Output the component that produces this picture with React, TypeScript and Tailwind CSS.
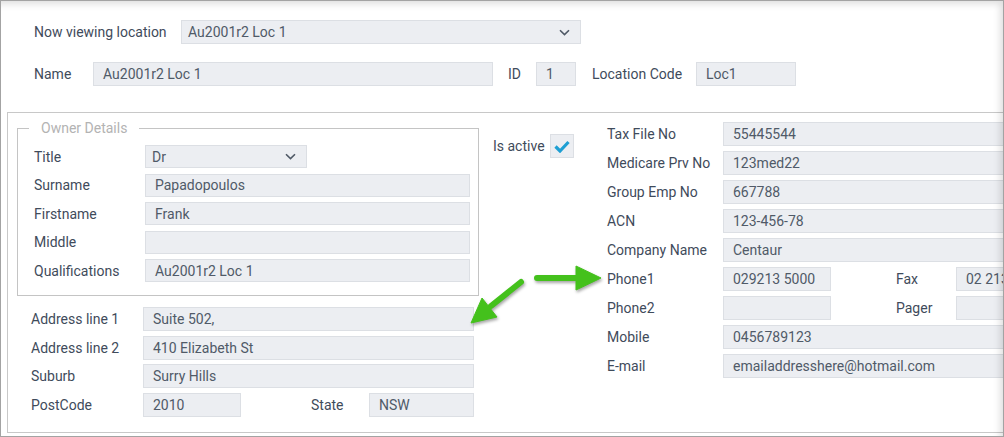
import React from "react";

const font = { fontFamily: "Roboto, 'Noto Sans', sans-serif" };

function Chevron() {
  return (
    <svg width="11" height="7" viewBox="0 0 11 7" className="shrink-0">
      <path d="M1 1.2 L5.5 5.6 L10 1.2" fill="none" stroke="#4f5966" strokeWidth="1.6" />
    </svg>
  );
}

function Field({ value = "", className = "" }: { value?: string; className?: string }) {
  return (
    <div
      className={
        "h-full flex items-center bg-[#eceef2] border border-[#dcdfe4] pl-[9px] text-[#505a68] whitespace-nowrap overflow-hidden " +
        className
      }
    >
      {value}
    </div>
  );
}

function Select({ value, className = "" }: { value: string; className?: string }) {
  return (
    <div
      className={
        "h-full flex items-center justify-between bg-[#eceef2] border border-[#dcdfe4] pl-[6px] pr-[10px] text-[#505a68] " +
        className
      }
    >
      <span>{value}</span>
      <Chevron />
    </div>
  );
}

function Row({
  label,
  labelW,
  children,
  h,
}: {
  label: string;
  labelW: string;
  children: React.ReactNode;
  h: string;
}) {
  return (
    <div className={"flex items-center " + h}>
      <div className={"shrink-0 text-[#3f4b5b] " + labelW}>{label}</div>
      {children}
    </div>
  );
}

export default function App() {
  return (
    <div
      className="relative w-[1004px] h-[437px] border border-[#a3a3a3] bg-white overflow-hidden text-[14px] leading-[20px]"
      style={font}
    >
      {/* header */}
      <div className="pt-[19px] pl-[33px] flex flex-col gap-[18px]">
        <div className="flex items-center h-[24px]">
          <div className="w-[147px] text-[#3f4b5b]">Now viewing location</div>
          <Select value="Au2001r2 Loc 1" className="w-[400px]" />
        </div>
        <div className="flex items-center h-[24px]">
          <div className="w-[59px] text-[#3f4b5b]">Name</div>
          <Field value="Au2001r2 Loc 1" className="w-[400px]" />
          <div className="ml-[15px] w-[28px] text-[#3f4b5b]">ID</div>
          <Field value="1" className="w-[40px]" />
          <div className="ml-[16px] w-[104px] text-[#3f4b5b]">Location Code</div>
          <Field value="Loc1" className="w-[100px]" />
        </div>
      </div>

      {/* main panel */}
      <div className="mt-[26px] ml-[6px] w-[1010px] h-[321px] border border-[#c8c8c8] flex">
        {/* left column */}
        <div className="w-[471px] shrink-0 pl-[9px]">
          <fieldset className="mt-[5px] w-[462px] border border-[#c4c4c4] pb-[13px]">
            <legend className="ml-[11px] px-[12px] text-[#b3b3b3] leading-[20px]">Owner Details</legend>
            <div className="pt-[7px] pl-[16px] flex flex-col gap-[5.5px]">
              <Row label="Title" labelW="w-[111px]" h="h-[23px]">
                <Select value="Dr" className="w-[162px]" />
              </Row>
              <Row label="Surname" labelW="w-[111px]" h="h-[23px]">
                <Field value="Papadopoulos" className="w-[325px]" />
              </Row>
              <Row label="Firstname" labelW="w-[111px]" h="h-[23px]">
                <Field value="Frank" className="w-[325px]" />
              </Row>
              <Row label="Middle" labelW="w-[111px]" h="h-[23px]">
                <Field value="" className="w-[325px]" />
              </Row>
              <Row label="Qualifications" labelW="w-[111px]" h="h-[23px]">
                <Field value="Au2001r2 Loc 1" className="w-[325px]" />
              </Row>
            </div>
          </fieldset>

          <div className="mt-[11px] pl-[14px] flex flex-col gap-[4.67px]">
            <Row label="Address line 1" labelW="w-[112px]" h="h-[24px]">
              <Field value="Suite 502," className="w-[331px]" />
            </Row>
            <Row label="Address line 2" labelW="w-[112px]" h="h-[24px]">
              <Field value="410 Elizabeth St" className="w-[331px]" />
            </Row>
            <Row label="Suburb" labelW="w-[112px]" h="h-[24px]">
              <Field value="Surry Hills" className="w-[331px]" />
            </Row>
            <Row label="PostCode" labelW="w-[112px]" h="h-[24px]">
              <Field value="2010" className="w-[98px]" />
              <div className="ml-[70px] w-[58px] text-[#3f4b5b]">State</div>
              <Field value="NSW" className="w-[105px]" />
            </Row>
          </div>
        </div>

        {/* is active */}
        <div className="ml-[14px] mt-[21px] flex items-center h-[24px] shrink-0">
          <div className="w-[57px] text-[#3f4b5b]">Is active</div>
          <div className="w-[24px] h-[24px] bg-[#eceef2] border border-[#dcdfe4] flex items-center justify-center">
            <svg width="16" height="13" viewBox="0 0 16 13">
              <path d="M1.5 6.5 L6 11 L14.5 2" fill="none" stroke="#1e9fd3" strokeWidth="3.2" />
            </svg>
          </div>
        </div>

        {/* right column */}
        <div className="ml-[33px] mt-[9px] flex-1 flex flex-col gap-[5px]">
          {[
            ["Tax File No", "55445544"],
            ["Medicare Prv No", "123med22"],
            ["Group Emp No", "667788"],
            ["ACN", "123-456-78"],
            ["Company Name", "Centaur"],
          ].map(([l, v]) => (
            <Row key={l} label={l} labelW="w-[116px]" h="h-[24px]">
              <Field value={v} className="flex-1" />
            </Row>
          ))}
          <Row label="Phone1" labelW="w-[116px]" h="h-[24px]">
            <Field value="029213 5000" className="w-[108px]" />
            <div className="ml-[65px] w-[60px] text-[#3f4b5b]">Fax</div>
            <Field value="02 2135 5001" className="flex-1" />
          </Row>
          <Row label="Phone2" labelW="w-[116px]" h="h-[24px]">
            <Field value="" className="w-[108px]" />
            <div className="ml-[65px] w-[60px] text-[#3f4b5b]">Pager</div>
            <Field value="" className="flex-1" />
          </Row>
          <Row label="Mobile" labelW="w-[116px]" h="h-[24px]">
            <Field value="0456789123" className="flex-1" />
          </Row>
          <Row label="E-mail" labelW="w-[116px]" h="h-[24px]">
            <Field value="emailaddresshere@hotmail.com" className="flex-1" />
          </Row>
        </div>
      </div>

      {/* green arrows */}
      <svg
        className="absolute left-0 top-0 pointer-events-none drop-shadow-[1px_2px_1.5px_rgba(0,0,0,0.35)]"
        width="1004"
        height="437"
        viewBox="0 0 1004 437"
      >
        <g fill="#44c11c" stroke="#44c11c">
          <line x1="536" y1="277" x2="580" y2="277" strokeWidth="6" strokeLinecap="round" />
          <polygon points="575,265 600,277 575,289" strokeWidth="1" strokeLinejoin="round" />
          <line x1="520" y1="281" x2="490" y2="305" strokeWidth="6" strokeLinecap="round" />
          <polygon points="470,322 481,297 496,316" strokeWidth="1" strokeLinejoin="round" />
        </g>
      </svg>

      {/* frame inner shadow */}
      <div className="absolute inset-0 pointer-events-none shadow-[inset_-6px_6px_7px_-3px_rgba(0,0,0,0.13)]" />
    </div>
  );
}
